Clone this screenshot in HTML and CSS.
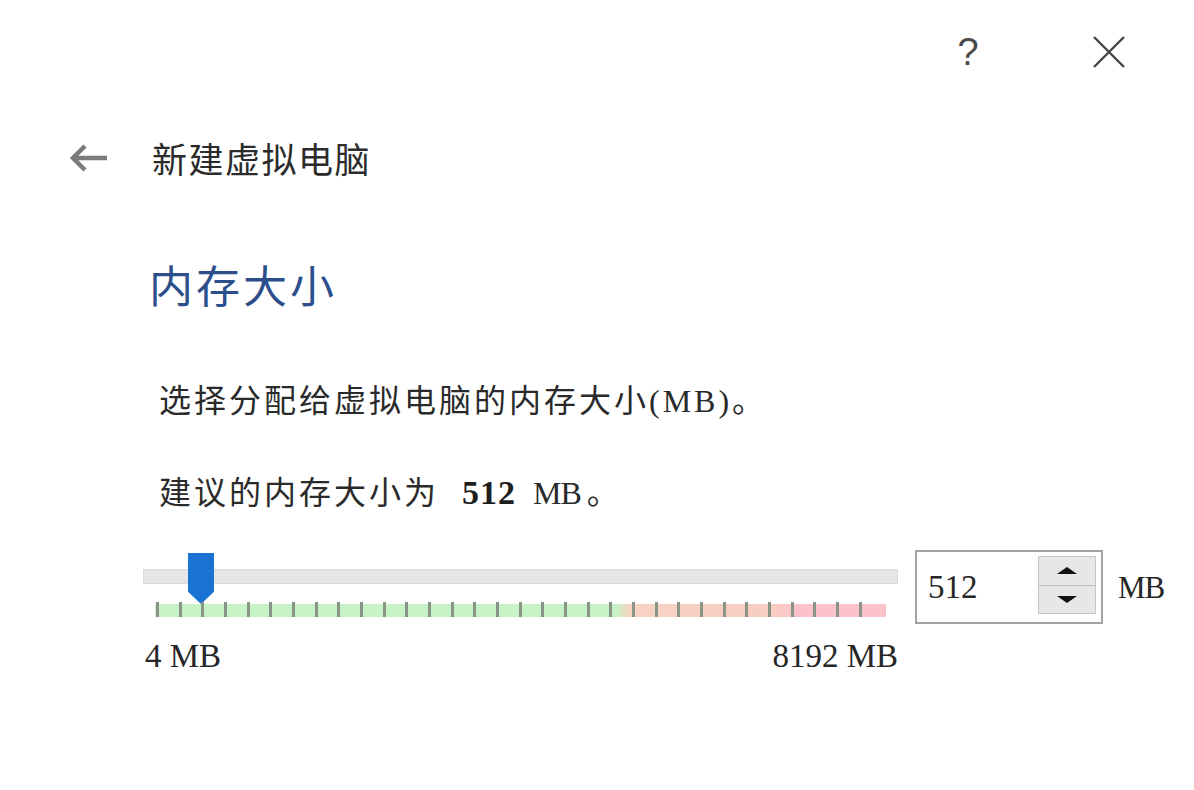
FILE: index.html
```html
<!DOCTYPE html>
<html lang="zh-CN">
<head>
<meta charset="utf-8">
<title>新建虚拟电脑</title>
<link rel="stylesheet" href="styles.css">
</head>
<body>
<div class="dialog">
  <div class="topbar">
    <button class="icon-btn help">?</button>
    <button class="icon-btn close" aria-label="close">
      <svg width="34" height="34" viewBox="0 0 34 34"><path d="M2 2 L32 32 M32 2 L2 32" stroke="#454545" stroke-width="2.4" fill="none"/></svg>
    </button>
  </div>
  <div class="header">
    <svg class="back" width="40" height="30" viewBox="0 0 40 30"><path d="M39 15 H5 M17 3 L5 15 L17 27" stroke="#7b7b7b" stroke-width="4.5" fill="none" stroke-linejoin="miter"/></svg>
    <span class="header-title">新建虚拟电脑</span>
  </div>
  <div class="content">
    <h2 class="page-title">内存大小</h2>
    <p class="desc">选择分配给虚拟电脑的内存大小(MB)。</p>
    <p class="desc second">建议的内存大小为 <b>512</b> <span class="mb">MB</span>。</p>
    <div class="slider-row">
      <div class="slider">
        <div class="track"></div>
        <div class="thumb"></div>
        <div class="band">
          <div class="ticks">
            <i></i><i></i><i></i><i></i><i></i><i></i><i></i><i></i>
            <i></i><i></i><i></i><i></i><i></i><i></i><i></i><i></i>
            <i></i><i></i><i></i><i></i><i></i><i></i><i></i><i></i>
            <i></i><i></i><i></i><i></i><i></i><i></i><i></i><i></i>
          </div>
        </div>
        <div class="scale"><span>4 MB</span><span>8192 MB</span></div>
      </div>
      <div class="spin">
        <span class="spin-value">512</span>
        <div class="spin-btns">
          <div class="spin-btn"><span class="tri up"></span></div>
          <div class="spin-btn"><span class="tri down"></span></div>
        </div>
      </div>
      <span class="unit">MB</span>
    </div>
  </div>
</div>
</body>
</html>
```
FILE: styles.css
```css
* { box-sizing: border-box; }
html, body { margin: 0; padding: 0; background: #ffffff; }
body {
  width: 1194px;
  height: 790px;
  overflow: hidden;
  font-family: "Liberation Serif", "Noto Sans CJK SC", serif;
  color: #262626;
}
.dialog { display: flex; flex-direction: column; }

.topbar {
  height: 100px;
  display: flex;
  justify-content: flex-end;
  align-items: center;
  padding-right: 65px;
  gap: 101px;
  padding-top: 4px;
}
.icon-btn {
  width: 40px;
  height: 40px;
  border: 0;
  background: transparent;
  padding: 0;
  display: flex;
  align-items: center;
  justify-content: center;
  color: #4a4a4a;
}
.help {
  font-family: "Liberation Sans", sans-serif;
  font-size: 38px;
  line-height: 40px;
}

.header {
  margin-top: 30px;
  height: 56px;
  display: flex;
  align-items: center;
  padding-left: 68px;
}
.back { display: block; }
.header-title {
  margin-left: 44px;
  font-family: "Noto Sans CJK SC", sans-serif;
  font-size: 35px;
  line-height: 56px;
  color: #2b2b2b;
  letter-spacing: 1.5px;
}

.content { padding-left: 143px; }
.page-title {
  margin: 68px 0 0 6px;
  font-family: "Noto Sans CJK SC", sans-serif;
  font-weight: 400;
  font-size: 44px;
  line-height: 60px;
  letter-spacing: 3px;
  color: #2c4f8c;
}
.desc {
  margin: 62px 0 0 16px;
  font-size: 32px;
  line-height: 50px;
  letter-spacing: 3px;
  color: #2a2a2a;
}
.desc.second { margin-top: 42px; }
.desc b {
  font-weight: 700;
  font-size: 34px;
  color: #1e1e1e;
  letter-spacing: 1px;
  margin-left: 12px;
}
.desc .mb { margin-left: 6px; margin-right: 6px; letter-spacing: -1px; }

.slider-row {
  margin-top: 32px;
  display: flex;
  align-items: flex-start;
}
.slider {
  position: relative;
  width: 755px;
  height: 130px;
}
.track {
  margin-top: 19px;
  height: 15px;
  background: #e6e6e8;
  border: 1px solid #dadadc;
}
.thumb {
  position: absolute;
  left: 45px;
  top: 3px;
  width: 26px;
  height: 51px;
  background: #1a72d2;
  clip-path: polygon(0 0, 100% 0, 100% 76%, 50% 100%, 0 76%);
}
.band {
  margin: 18px 0 0 12px;
  width: 731px;
  height: 15px;
  position: relative;
}
.band::before {
  content: "";
  position: absolute;
  left: 0; right: 0; top: 2px; bottom: 0;
  background: linear-gradient(to right,
    #c7f3c7 0, #c7f3c7 462px,
    #f7d3c2 474px, #f8cdc2 620px,
    #fbc3c9 640px, #fbc3c9 100%);
}
.ticks {
  position: relative;
  width: 706px;
  margin-left: 1px;
  height: 15px;
  display: flex;
  justify-content: space-between;
}
.ticks i {
  display: block;
  width: 3px;
  height: 15px;
  background: #8a9587;
}
.scale {
  margin-top: 24px;
  display: flex;
  justify-content: space-between;
  padding-left: 2px;
  font-size: 33px;
  line-height: 30px;
  color: #262626;
}

.spin {
  margin-left: 17px;
  width: 188px;
  height: 74px;
  border: 2px solid #a3a3a3;
  display: flex;
  align-items: stretch;
  padding: 4px 5px 8px 11px;
}
.spin-value {
  flex: 1;
  display: flex;
  align-items: center;
  font-size: 33px;
  color: #262626;
  padding-top: 4px;
}
.spin-btns {
  width: 58px;
  display: flex;
  flex-direction: column;
  border: 1px solid #c4c4c4;
  background: #e7e7e7;
}
.spin-btn {
  flex: 1;
  display: flex;
  align-items: center;
  justify-content: center;
}
.spin-btn + .spin-btn { border-top: 1px solid #bdbdbd; }
.tri {
  width: 0; height: 0;
  border-left: 10px solid transparent;
  border-right: 10px solid transparent;
}
.tri.up { border-bottom: 7px solid #111; }
.tri.down { border-top: 7px solid #111; }

.unit {
  margin-left: 15px;
  height: 74px;
  display: flex;
  align-items: center;
  font-size: 31px;
  letter-spacing: -1px;
  color: #262626;
  padding-top: 2px;
}
```
